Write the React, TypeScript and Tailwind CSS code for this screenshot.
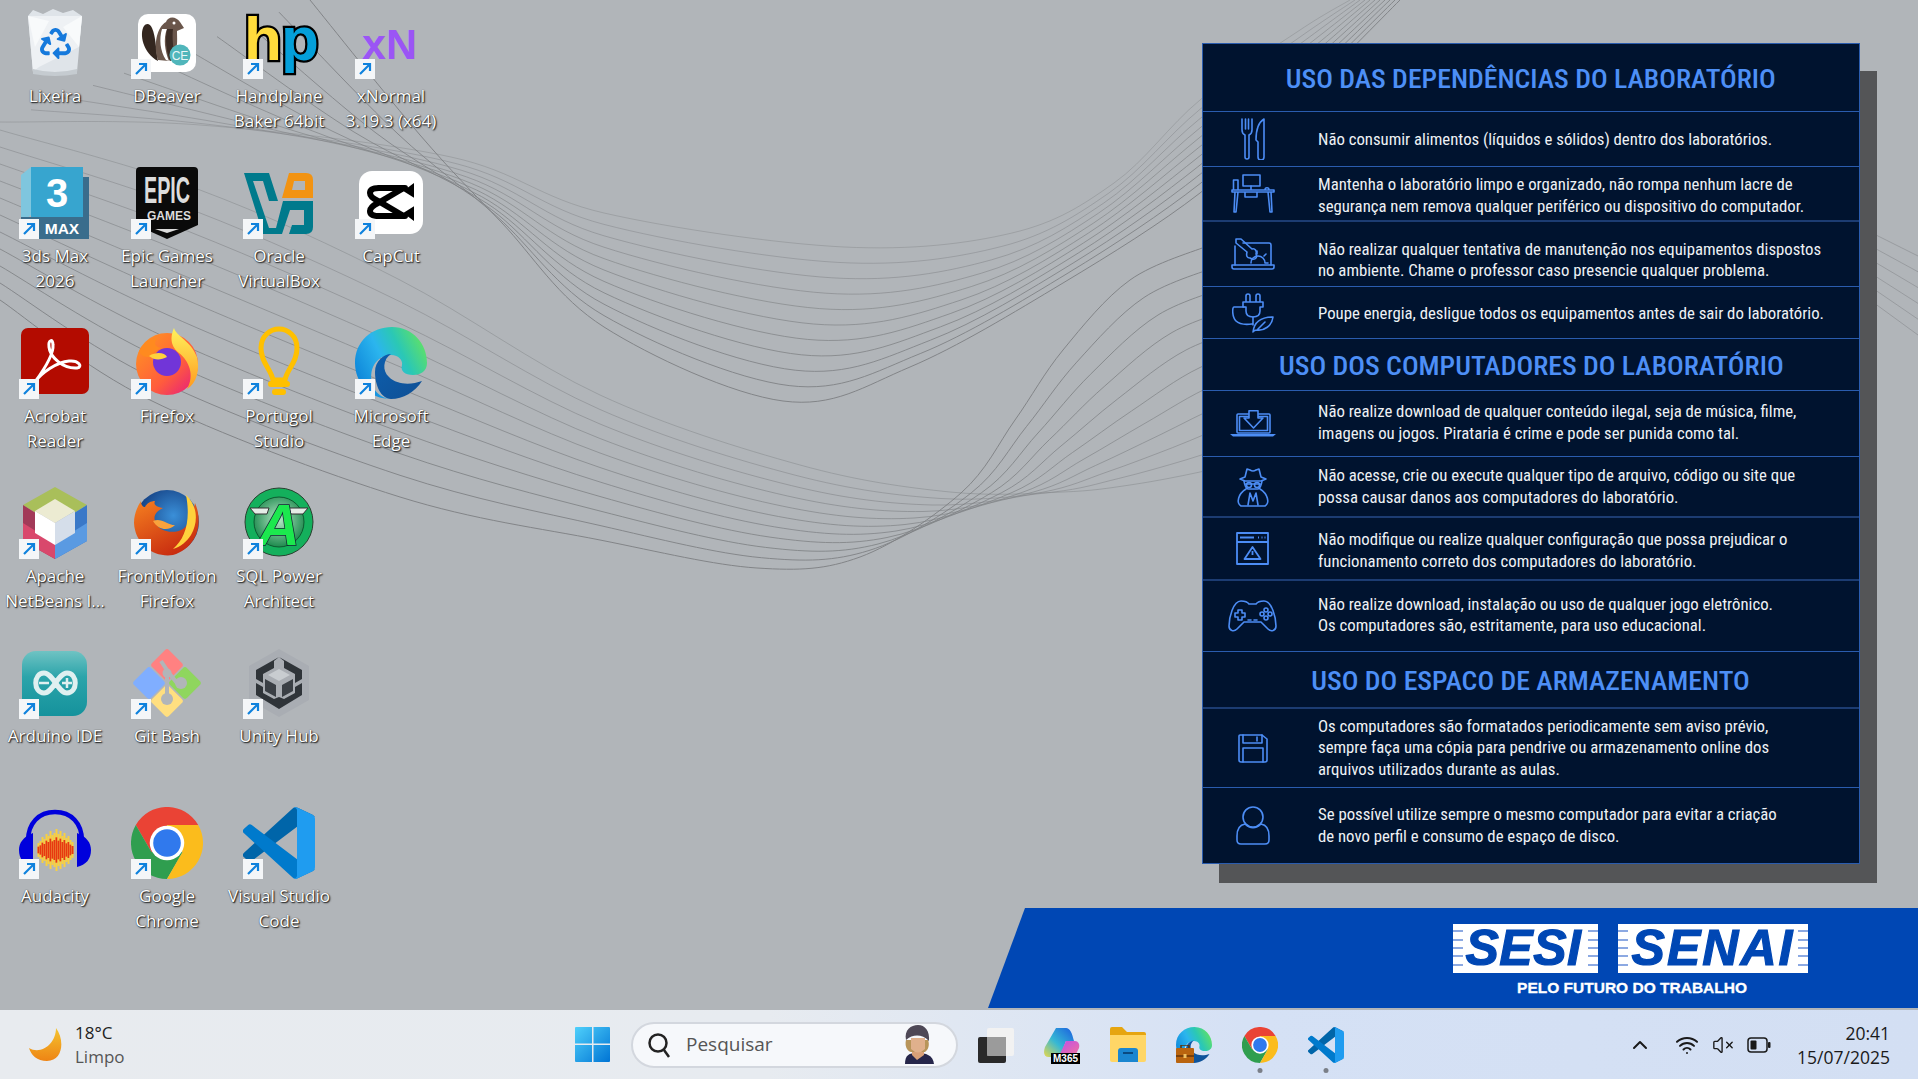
import { Fragment, type ReactNode } from "react";
import { ChevronUp, VolumeX, Wifi } from "lucide-react";
import { FaRecycle } from "react-icons/fa";

type Pt = [number, number];

// wallpaper: bundles of lines, each one a blend between two guide curves
const spline = (p: Pt[]) => {
  let d = `M${p[0][0]} ${p[0][1]}`;
  for (let i = 0; i < p.length - 1; i++) {
    const a = p[Math.max(i - 1, 0)];
    const b = p[i];
    const c = p[i + 1];
    const e = p[Math.min(i + 2, p.length - 1)];
    d += ` C${b[0] + (c[0] - a[0]) / 6} ${b[1] + (c[1] - a[1]) / 6} ${c[0] - (e[0] - b[0]) / 6} ${c[1] - (e[1] - b[1]) / 6} ${c[0]} ${c[1]}`;
  }
  return d;
};

const bundle = (from: Pt[], to: Pt[], n: number) =>
  Array.from({ length: n }, (_, i) => {
    const t = i / (n - 1);
    return spline(from.map((p, k) => [p[0] + (to[k][0] - p[0]) * t, p[1] + (to[k][1] - p[1]) * t] as Pt));
  });

const upperA: Pt[] = [[0, 122], [200, 125], [451, 157], [604, 213], [844, 247], [1012, 233], [1114, 183], [1200, 100], [1300, 30], [1350, 0]];
const upperB: Pt[] = [[310, 0], [420, 135], [502, 223], [604, 327], [783, 401], [910, 367], [1063, 283], [1200, 193], [1300, 100], [1400, 0]];
const lowerA: Pt[] = [[0, 130], [200, 190], [400, 280], [600, 395], [800, 465], [950, 492], [1063, 492], [1130, 485], [1200, 472], [1270, 455], [1340, 440]];
const lowerB: Pt[] = [[0, 300], [150, 400], [400, 497], [600, 540], [757, 568], [860, 557], [961, 493], [1015, 420], [1063, 350], [1130, 280], [1210, 245]];
const rightA: Pt[] = [[1870, 232], [1918, 256]];
const rightB: Pt[] = [[1870, 300], [1918, 335]];

const Wallpaper = () => (
  <svg className="absolute inset-0 h-full w-full" viewBox="0 0 1918 1010" fill="none">
    {bundle(upperA, upperB, 11).map((d, i) => (
      <path key={i} d={d} stroke="#7f8285" strokeWidth="1" opacity={0.4 + i * 0.055} />
    ))}
    {bundle(lowerA, lowerB, 11).map((d, i) => (
      <path key={i} d={d} stroke="#7f8285" strokeWidth="1" opacity={0.45 + i * 0.05} />
    ))}
    {bundle(rightA, rightB, 6).map((d, i) => (
      <path key={i} d={d} stroke="#7f8285" strokeWidth="1" opacity={0.5} />
    ))}
  </svg>
);

const Box = ({ children }: { children: ReactNode }) => (
  <svg viewBox="0 0 72 72" className="h-[72px] w-[72px] overflow-visible">
    {children}
  </svg>
);

const LOGO_FONT = "'Liberation Sans', sans-serif";

/* desktop icons */
const Bin = () => (
  <div className="relative h-[72px] w-[72px]">
    <svg viewBox="0 0 72 72" className="absolute inset-0">
      <path d="M9 9 L14 3 L24 7 L34 2 L44 6 L54 3 L63 9 L58 65 Q36 70 14 65Z" fill="#dfe4e9" />
      <path d="M9 9 L63 9 L60 40 L20 60 L14 65Z" fill="#eef1f4" />
      <path d="M9 9 L30 14 L16 40 Z M63 9 L44 20 L60 40Z" fill="#f8fafb" />
      <path d="M14 62 Q36 68 58 62 L58 67 Q36 71 14 67Z" fill="#c5cbd0" />
    </svg>
    <FaRecycle className="absolute left-[21px] top-[21px] h-[31px] w-[31px] text-[#1579dc]" />
  </div>
);

const DBeaver = () => (
  <Box>
    <rect x="7" y="7" width="58" height="58" rx="10" fill="#fff" />
    <path d="M13 19 C8 27 12 46 27 54 C25 44 25 30 21 21 C19 16 15 16 13 19Z" fill="#33261f" />
    <path d="M27 53 C22 38 26 20 35 15 C37 9 45 9 49 15 L53 21 L46 24 C46 32 47 38 44 45 L38 54Z" fill="#6a564b" />
    <path d="M31 22 C28 32 29 44 35 53 L38 54 C34 44 32 32 36 22Z" fill="#fff" />
    <path d="M36 22 C34 32 35 44 39 54 L44 52 C42 40 41 30 42 22Z" fill="#3b2c25" />
    <circle cx="43" cy="16" r="1.500" fill="#fff" />
    <circle cx="49" cy="48" r="10.500" fill="#50b6bb" />
    <text x="49" y="52.500" textAnchor="middle" fontSize="12" fill="#e9f7f7" fontFamily={LOGO_FONT}>CE</text>
  </Box>
);

const Handplane = () => (
  <Box>
    <text x="1" y="53" fontSize="62" fontWeight="700" stroke="#000" strokeWidth="4.500" paintOrder="stroke" fontFamily={LOGO_FONT} letterSpacing="-1">
      <tspan fill="#ffdc3c">h</tspan>
      <tspan fill="#049fd9">p</tspan>
    </text>
  </Box>
);

const XNormal = () => (
  <Box>
    <text x="7" y="52" fontSize="43" fontWeight="700" fill="#9b55f5" fontFamily={LOGO_FONT}>xN</text>
  </Box>
);

const Max = () => (
  <Box>
    <path d="M2 8 L12 0 V48 L2 56Z" fill="#7fc6de" />
    <path d="M64 10 H70 V72 H12 V50 H64Z" fill="#3a6d8c" />
    <rect x="12" y="0" width="52" height="50" fill="#37a5cf" />
    <rect x="2" y="50" width="68" height="22" fill="#3a6d8c" />
    <text x="38" y="40" textAnchor="middle" fontSize="40" fontWeight="700" fill="#fff" fontFamily={LOGO_FONT}>3</text>
    <text x="43" y="67" textAnchor="middle" fontSize="15.500" fontWeight="700" fill="#fff" fontFamily={LOGO_FONT}>MAX</text>
  </Box>
);

const Epic = () => (
  <Box>
    <path d="M9 0 H63 Q67 0 67 4 V58 L36 72 L5 58 V4 Q5 0 9 0Z" fill="#0a0a0a" />
    <text x="36" y="36" textAnchor="middle" fontSize="36" fontWeight="700" fill="#dcdcdc" fontFamily={LOGO_FONT} textLength="46" lengthAdjust="spacingAndGlyphs">EPIC</text>
    <text x="38" y="53" textAnchor="middle" fontSize="13" fontWeight="700" fill="#dcdcdc" fontFamily={LOGO_FONT} textLength="44" lengthAdjust="spacingAndGlyphs">GAMES</text>
    <path d="M24 62 H48 L36 66Z" fill="#dcdcdc" />
  </Box>
);

const VBox = () => (
  <Box>
    <path d="M1 6 H26 L35 34 H26 L20 14 H10 L26 61 L33 61 L40 34 H70 V60 Q70 67 63 67 H46 L49 58 H61 V43 H47 L39 67 H20Z" fill="#007a8c" />
    <path d="M46 6 H63 Q70 6 70 13 V31 H39Z M51 14 L49 23 H62 V14Z" fill="#f29312" fillRule="evenodd" />
  </Box>
);

const CapCut = () => (
  <Box>
    <rect x="4" y="4" width="64" height="63" rx="13" fill="#fff" />
    <path d="M23 21 H50 M23 49 H50 M24 21 Q15 21 15 26 Q15 30 23 34 L47 48 M24 49 Q15 49 15 44 Q15 40 23 36 L47 22" fill="none" stroke="#000" strokeWidth="6" strokeLinecap="round" />
    <path d="M58 18 V29 L50 24Z M58 52 V41 L50 46Z" fill="#000" stroke="#000" strokeWidth="2" />
  </Box>
);

const Acrobat = () => (
  <Box>
    <rect x="2" y="1" width="68" height="66" rx="7" fill="#b30b00" />
    <path d="M16 55 C24 44 35 28 34 18 C34 11 29 13 30 20 C31 30 44 42 58 41 C64 40 60 33 50 34 C38 35 22 46 16 55Z" fill="none" stroke="#fff" strokeWidth="3" />
  </Box>
);

const Firefox = () => (
  <Box>
    <defs>
      <linearGradient id="ff-a" x1="0" y1="0" x2="1" y2="1">
        <stop offset="0" stopColor="#ff9a1f" />
        <stop offset="0.6" stopColor="#ff5d3c" />
        <stop offset="1" stopColor="#e31587" />
      </linearGradient>
      <linearGradient id="ff-b" x1="0" y1="0" x2="0" y2="1">
        <stop offset="0" stopColor="#fff25c" />
        <stop offset="1" stopColor="#ff9a1f" />
      </linearGradient>
    </defs>
    <circle cx="36" cy="37" r="31" fill="url(#ff-a)" />
    <path d="M43 1 C45 9 60 14 66 30 C69 42 66 56 56 62 C64 48 58 34 48 26 C38 18 40 8 43 1Z" fill="url(#ff-b)" />
    <circle cx="36" cy="35" r="14" fill="#7135d8" />
    <path d="M8 24 C14 14 20 10 26 12 C22 16 24 20 30 21 C24 24 20 26 24 28 C18 32 10 30 8 24Z" fill="#ff8a1f" />
    <path d="M18 29 C26 24 34 26 36 30 C30 33 24 34 18 29Z" fill="#ffd23c" />
  </Box>
);

const Portugol = () => (
  <Box>
    <path d="M30 53 C28 42 18 36 18 21 C18 9 27 2 36 2 C45 2 54 9 54 21 C54 36 44 42 42 53Z" fill="none" stroke="#ffc000" strokeWidth="5" />
    <rect x="25" y="54" width="22" height="6" rx="3" fill="#ffc000" />
    <rect x="29" y="62" width="14" height="6" rx="3" fill="#ffc000" />
  </Box>
);

const EdgeArt = () => (
  <>
    <defs>
      <linearGradient id="edge-a" x1="0" y1="0.8" x2="1" y2="0.3">
        <stop offset="0" stopColor="#0a7fd6" />
        <stop offset="0.45" stopColor="#2bb5ee" />
        <stop offset="0.7" stopColor="#2bc8b4" />
        <stop offset="1" stopColor="#5fe068" />
      </linearGradient>
      <linearGradient id="edge-b" x1="0" y1="0" x2="1" y2="1">
        <stop offset="0" stopColor="#0d5fae" />
        <stop offset="1" stopColor="#0f4f94" />
      </linearGradient>
    </defs>
    <path d="M0 36 C0 14 17 0 37 0 C58 0 72 17 72 36 C72 44 66 48 58 48 C50 48 45 44 47 38 C48 34 44 28 36 28 C22 28 12 42 18 60 C22 68 30 72 36 72 C15 72 0 56 0 36Z" fill="url(#edge-a)" />
    <path d="M20 45 C20 34 29 27 36 27 C28 32 27 44 34 50 C42 58 56 58 67 54 C60 65 48 72 36 72 C26 72 20 58 20 45Z" fill="url(#edge-b)" />
  </>
);

const Edge = () => (
  <Box>
    <EdgeArt />
  </Box>
);

const NetBeans = () => (
  <Box>
    <path d="M36 0 L68 18 L52 28 L36 20 L20 28 L4 18Z" fill="#a9bf5a" />
    <path d="M4 18 L20 28 V42 L36 52 V72 L4 54Z" fill="#a23a58" />
    <path d="M4 36 L36 56 V72 L4 54Z" fill="#d9486c" />
    <path d="M68 18 L52 28 V42 L36 52 V72 L68 54Z" fill="#3a78c8" />
    <path d="M68 36 L36 56 V72 L68 54Z" fill="#5a9ae2" />
    <path d="M36 12 L56 24 L36 36 L16 24Z" fill="#ecebd2" />
    <path d="M16 24 L36 36 V58 L16 46Z" fill="#fff" />
    <path d="M56 24 L36 36 V58 L56 46Z" fill="#d5deea" />
  </Box>
);

const OldFirefox = () => (
  <Box>
    <defs>
      <radialGradient id="of-a" cx="0.6" cy="0.4" r="0.6">
        <stop offset="0" stopColor="#3a8fd8" />
        <stop offset="1" stopColor="#123a7c" />
      </radialGradient>
      <linearGradient id="of-b" x1="0" y1="0" x2="0.6" y2="1">
        <stop offset="0" stopColor="#f58020" />
        <stop offset="1" stopColor="#c82c10" />
      </linearGradient>
    </defs>
    <circle cx="36" cy="35" r="32" fill="url(#of-a)" />
    <path d="M64 16 C72 34 68 60 42 68 C24 71 4 58 3 36 C3 28 6 20 10 14 C10 18 12 20 14 20 C16 16 20 14 24 14 C22 18 26 20 32 21 C26 24 22 28 24 34 C26 44 42 48 52 42 C60 36 62 26 64 16Z" fill="url(#of-b)" />
    <path d="M55 8 C66 18 68 34 60 48 C56 54 50 60 42 62 C54 52 60 34 55 8Z" fill="#ffd23c" />
    <path d="M22 34 C30 30 36 38 44 38 C38 44 28 44 22 34Z" fill="#f9a23c" />
  </Box>
);

const SqlPower = () => (
  <Box>
    <defs>
      <radialGradient id="sp-a" cx="0.5" cy="0.45" r="0.55">
        <stop offset="0" stopColor="#b8e8c8" />
        <stop offset="1" stopColor="#1e8a4e" />
      </radialGradient>
    </defs>
    <circle cx="36" cy="35" r="34" fill="#14b05c" stroke="#2a4030" strokeWidth="1" />
    <circle cx="36" cy="35" r="25" fill="url(#sp-a)" stroke="#0d5a30" strokeWidth="1" />
    <path d="M7 21 H26 L24 27 H12Z M65 21 H46 L48 27 H60Z" fill="#e4ece6" stroke="#333" strokeWidth="1" />
    <text x="36" y="58" textAnchor="middle" fontSize="58" fontWeight="700" fontStyle="italic" fill="#1ce84e" stroke="#123" strokeWidth="1.500" paintOrder="stroke" fontFamily={LOGO_FONT}>A</text>
  </Box>
);

const Arduino = () => (
  <Box>
    <defs>
      <linearGradient id="ar-a" x1="0" y1="0" x2="0" y2="1">
        <stop offset="0" stopColor="#6fc3c3" />
        <stop offset="0.4" stopColor="#2ba4aa" />
        <stop offset="1" stopColor="#15929c" />
      </linearGradient>
    </defs>
    <rect x="3" y="4" width="65" height="65" rx="14" fill="url(#ar-a)" />
    <path d="M25 26 C14 26 14 46 25 46 C34 46 39 26 48 26 C59 26 59 46 48 46 C39 46 34 26 25 26Z" fill="none" stroke="#dff0f0" strokeWidth="5" />
    <path d="M20 36 H30 M43 36 H53 M48 31 V41" stroke="#dff0f0" strokeWidth="2.500" />
  </Box>
);

const GitBash = () => (
  <Box>
    <rect x="24" y="6" width="24" height="24" rx="3" transform="rotate(45 36 18)" fill="#ff8181" />
    <rect x="6" y="24" width="24" height="24" rx="3" transform="rotate(45 18 36)" fill="#80aeff" />
    <rect x="42" y="24" width="24" height="24" rx="3" transform="rotate(45 54 36)" fill="#8fd65e" />
    <rect x="24" y="42" width="24" height="24" rx="3" transform="rotate(45 36 54)" fill="#ffdf80" />
    <path d="M30 14 L38 26 L46 36 M36 26 V50" stroke="#b1b5b9" strokeWidth="4" fill="none" />
    <circle cx="36" cy="26" r="4.500" fill="#b1b5b9" />
    <circle cx="50" cy="36" r="6" fill="#b1b5b9" />
    <circle cx="36" cy="52" r="6" fill="#b1b5b9" />
  </Box>
);

const Unity = () => (
  <Box>
    <path d="M36 2 L66 19 V53 L36 70 L6 53 V19Z" fill="#a9adb3" />
    <path d="M36 10 L59 23 V32 L52 36 V27 L41 21 V14 Z M36 10 L13 23 V32 L20 36 V27 L31 21 V14Z" fill="#2f3439" />
    <path d="M36 22 L47 28 L36 34 L25 28Z" fill="#c8ccd0" />
    <path d="M13 36 L20 40 V46 L31 52 L36 50 L41 52 L52 46 V40 L59 36 V48 L36 62 L13 48Z" fill="#2f3439" />
    <path d="M22 32 L33 38 V50 L22 44Z M50 32 L39 38 V50 L50 44Z" fill="#3a3f45" />
  </Box>
);

const waveBars = [10, 14, 22, 18, 28, 24, 34, 26, 30, 38, 28, 34, 24, 30, 20, 24, 16, 12];
const Audacity = () => (
  <Box>
    <path d="M9 44 V34 C9 16 20 5 36 5 C52 5 63 16 63 34 V44" fill="none" stroke="#0000dc" strokeWidth="4.500" />
    <path d="M14 26 C4 30 0 36 0 43 C0 52 5 58 14 60Z M58 26 C68 30 72 36 72 43 C72 52 67 58 58 60Z" fill="#0000dc" />
    {waveBars.map((h, i) => (
      <Fragment key={i}>
        <rect x={18.500 + i * 2} y={43 - h / 2 - 2} width="2" height={h + 4} fill="#f8d040" />
        <rect x={18.500 + i * 2} y={43 - h / 3} width="2" height={(h * 2) / 3} fill="#e83810" />
      </Fragment>
    ))}
  </Box>
);

const ChromeArt = () => (
  <>
    <path d="M24 24 L13.600 30 L3.200 12 A24 24 0 0 1 44.800 12 H24Z" fill="#ea4335" />
    <path d="M24 24 L34.400 30 L24 48 A24 24 0 0 1 3.200 12 L13.600 30Z" fill="#2f9e4f" />
    <path d="M24 24 L24 12 H44.800 A24 24 0 0 1 24 48 L34.400 30Z" fill="#fbbc1c" />
    <circle cx="24" cy="24" r="11.500" fill="#fff" />
    <circle cx="24" cy="24" r="9.200" fill="#3079ed" />
  </>
);

const VsArt = () => (
  <>
    <path d="M96.500 10.800 L75.900 0.900 A6.200 6.200 0 0 0 68.900 2.100 L1.400 63.600 A4.200 4.200 0 0 0 1.400 69.800 L6.900 74.800 A4.200 4.200 0 0 0 12.200 75 L93.400 13.400 A4.100 4.100 0 0 1 100 16.700 V16.400 A6.200 6.200 0 0 0 96.500 10.800Z" fill="#0065a9" />
    <path d="M96.500 89.200 L75.900 99.100 A6.200 6.200 0 0 1 68.900 97.900 L1.400 36.400 A4.200 4.200 0 0 1 1.400 30.200 L6.900 25.200 A4.200 4.200 0 0 1 12.200 25 L93.400 86.600 A4.100 4.100 0 0 0 100 83.300 V83.600 A6.200 6.200 0 0 1 96.500 89.200Z" fill="#007acc" />
    <path d="M75.900 99.100 A6.200 6.200 0 0 1 68.900 97.900 C71.200 100.200 75 98.600 75 95.400 V4.600 C75 1.400 71.200 -0.200 68.900 2.100 A6.200 6.200 0 0 1 75.900 0.900 L96.500 10.800 A6.200 6.200 0 0 1 100 16.400 V83.600 A6.200 6.200 0 0 1 96.500 89.200Z" fill="#1f9cf0" />
  </>
);

const Chrome = () => (
  <svg viewBox="0 0 48 48" className="h-[72px] w-[72px]">
    <ChromeArt />
  </svg>
);

const VsCode = () => (
  <svg viewBox="0 0 100 100" className="h-[72px] w-[72px]">
    <VsArt />
  </svg>
);

type Shortcut = { name: ReactNode; icon: ReactNode; plain?: boolean };

const desktop: Shortcut[][] = [
  [
    { name: "Lixeira", icon: <Bin />, plain: true },
    { name: "DBeaver", icon: <DBeaver /> },
    { name: <>Handplane<br />Baker 64bit</>, icon: <Handplane /> },
    { name: <>xNormal<br />3.19.3 (x64)</>, icon: <XNormal /> },
  ],
  [
    { name: <>3ds Max<br />2026</>, icon: <Max /> },
    { name: <>Epic Games<br />Launcher</>, icon: <Epic /> },
    { name: <>Oracle<br />VirtualBox</>, icon: <VBox /> },
    { name: "CapCut", icon: <CapCut /> },
  ],
  [
    { name: <>Acrobat<br />Reader</>, icon: <Acrobat /> },
    { name: "Firefox", icon: <Firefox /> },
    { name: <>Portugol<br />Studio</>, icon: <Portugol /> },
    { name: <>Microsoft<br />Edge</>, icon: <Edge /> },
  ],
  [
    { name: <>Apache<br />NetBeans I...</>, icon: <NetBeans /> },
    { name: <>FrontMotion<br />Firefox</>, icon: <OldFirefox /> },
    { name: <>SQL Power<br />Architect</>, icon: <SqlPower /> },
  ],
  [
    { name: "Arduino IDE", icon: <Arduino /> },
    { name: "Git Bash", icon: <GitBash /> },
    { name: "Unity Hub", icon: <Unity /> },
  ],
  [
    { name: "Audacity", icon: <Audacity /> },
    { name: <>Google<br />Chrome</>, icon: <Chrome /> },
    { name: <>Visual Studio<br />Code</>, icon: <VsCode /> },
  ],
];

const ShortcutArrow = () => (
  <div className="absolute bottom-0 left-0 flex h-5 w-5 items-center justify-center bg-[#f4f6f8]">
    <svg viewBox="0 0 14 14" className="h-[14px] w-[14px]" fill="none" stroke="#0f82dd" strokeWidth="2.200">
      <path d="M2 12 L12 2 M5 2 H12 V9" />
    </svg>
  </div>
);

const DesktopIcon = ({ item }: { item: Shortcut }) => (
  <div className="flex h-40 w-28 flex-col items-center pr-[2px] pt-[7px]">
    <div className="relative">
      {item.icon}
      {!item.plain && <ShortcutArrow />}
    </div>
    <div className="mt-1 whitespace-nowrap text-center text-[17px] leading-[25px] text-white [text-shadow:1px_1px_1.500px_rgba(0,0,0,0.95),0_0_1px_rgba(0,0,0,0.7)]">
      {item.name}
    </div>
  </div>
);

/* poster icons */
const line = { fill: "none", stroke: "#4c8df5", strokeWidth: 1.600, strokeLinejoin: "round", strokeLinecap: "round" } as const;

const CutleryIcon = () => (
  <svg width="24" height="42" viewBox="0 0 24 42" {...line}>
    <path d="M1 1 V12 C1 15 3 16.500 4 17 V39 A2 2 0 0 0 8 39 V17 C9 16.500 11 15 11 12 V1 M4.500 1 V11 M7.500 1 V11" />
    <path d="M23 1 C18 4 15 11 15 22 L17 24 V39 A3 3 0 0 0 23 39Z" />
  </svg>
);
const DeskIcon = () => (
  <svg width="44" height="40" viewBox="0 0 44 40" {...line}>
    <rect x="12" y="1" width="17" height="11" />
    <path d="M20 12 V16 M16 16 H25 M1 16 H43 V18 H1Z M4 18 L3 38 H5 L7 18 M37 18 L39 38 H41 L40 18 M14 18 V23 H26 V18 M2.500 16 V6 H7 V16 M34 16 C34 13 38 13 38 16" />
  </svg>
);
const RepairIcon = () => (
  <svg width="44" height="33" viewBox="0 0 44 33" {...line}>
    <path d="M12 5 H38 Q40 5 40 7 V27 M4 27 V8" />
    <path d="M1 27 H43 V29 Q43 31 41 31 H3 Q1 31 1 29Z" />
    <path d="M5 1 L10 1 L21 11 C24 10 26 13 25 16 C27 20 23 23 19 20 C16 20 15 18 16 14 L5 5Z" />
    <path d="M20 25 A7 7 0 0 1 34 25 M26 16 V13 M33 18 L35 16 M37 25 H34" />
  </svg>
);
const PlugIcon = () => (
  <svg width="42" height="40" viewBox="0 0 42 40" {...line}>
    <path d="M14 9 V3 A2 2 0 0 1 18 3 V9 M24 9 V3 A2 2 0 0 1 28 3 V9 M11 9 H31 V14 H28 V18 C28 22 25 24 21 24 C17 24 14 22 14 18 V14 H11Z" />
    <path d="M21 24 V32 M12 14 H2 C0 14 0 24 4 28 C7 31 12 32 20 31" />
    <path d="M21 39 C22 30 28 24 41 24 C40 33 32 38 25 37 Q22 37 21 39Z M25 37 L33 29" />
  </svg>
);
const DownloadIcon = () => (
  <svg width="48" height="27" viewBox="0 0 48 27" {...line}>
    <rect x="8" y="4" width="33" height="19" rx="1" />
    <rect x="10.500" y="6.500" width="28" height="14" />
    <path d="M20 0.800 H29 V8 H34 L24.500 18 L15 8 H20Z" fill="#00132f" />
    <path d="M1 24 H47 L44 26.500 H4Z" fill="#4c8df5" stroke="none" />
  </svg>
);
const SpyIcon = () => (
  <svg width="34" height="40" viewBox="0 0 34 40" {...line}>
    <path d="M4 12 L9 10 L11 2 L14 3 Q17 5 20 3 L23 2 L25 10 L30 12 L25 14 H9Z" />
    <path d="M8 14 Q9 21 12 22 H22 Q25 21 26 14 M10 17 H24 M10 22 C2 27 0 36 5 39 H29 C34 36 32 27 24 22" />
    <circle cx="13" cy="18" r="2.500" />
    <circle cx="21" cy="18" r="2.500" />
    <path d="M12 38 L14 26 L17 34 L20 26 L22 38" />
  </svg>
);
const WarningWindowIcon = () => (
  <svg width="33" height="33" viewBox="0 0 33 33" {...line} strokeWidth="1.800" strokeLinecap="butt">
    <rect x="1" y="1" width="31" height="31" />
    <path d="M1 10 H32 M4 5.500 H18 M22 5.500 H23 M25.500 5.500 H26.500 M28.500 5.500 H29.500" />
    <path d="M16.500 15 L24.500 27 H8.500Z M16.500 19 V23" />
  </svg>
);
const PadIcon = () => (
  <svg width="49" height="32" viewBox="0 0 49 32" {...line}>
    <path d="M13 1 Q19 1 21 4 H28 Q30 1 36 1 C44 1 48 18 48 26 C48 31 43 32 40 29 L33 22 H16 L9 29 C6 32 1 31 1 26 C1 18 5 1 13 1Z" />
    <path d="M10 10 V13 H7 V17 H10 V20 H14 V17 H17 V13 H14 V10Z M20 20 H23 M26 20 H29" />
    <circle cx="38" cy="10" r="2" />
    <circle cx="38" cy="18" r="2" />
    <circle cx="34" cy="14" r="2" />
    <circle cx="42" cy="14" r="2" />
  </svg>
);
const FloppyIcon = () => (
  <svg width="30" height="29" viewBox="0 0 30 29" {...line}>
    <path d="M2 1 H24 L29 5 V26 Q29 28 27 28 H3 Q1 28 1 26 V2 Q1 1 2 1Z" />
    <path d="M5 1 V9 H24 V1 M19 3 V7 M5 28 V14 H25 V28" />
  </svg>
);
const UserIcon = () => (
  <svg width="34" height="39" viewBox="0 0 34 39" {...line}>
    <circle cx="17" cy="11" r="10" />
    <path d="M9 18 C3 19 1 24 1 30 V34 Q1 38 5 38 H29 Q33 38 33 34 V30 C33 24 31 19 25 18 C20 23 14 23 9 18Z" />
  </svg>
);

type Rule = { height: string; nudge: string; icon: ReactNode; text: ReactNode };
type Section = { title: string; height: string; rules: Rule[] };

const THIN = "border-b border-[#2a5cae]";
const THICK = "border-b-2 border-[#1c3c72]";

const sections: Section[] = [
  {
    title: "USO DAS DEPENDÊNCIAS DO LABORATÓRIO",
    height: `h-[68px] ${THIN}`,
    rules: [
      { height: `h-[55px] ${THIN}`, nudge: "mt-[2px]", icon: <CutleryIcon />, text: "Não consumir alimentos (líquidos e sólidos) dentro dos laboratórios." },
      { height: `h-[55px] ${THICK}`, nudge: "mt-[4px]", icon: <DeskIcon />, text: <>Mantenha o laboratório limpo e organizado, não rompa nenhum lacre de<br />segurança nem remova qualquer periférico ou dispositivo do computador.</> },
      { height: `h-[65px] ${THIN}`, nudge: "mt-[12px]", icon: <RepairIcon />, text: <>Não realizar qualquer tentativa de manutenção nos equipamentos dispostos<br />no ambiente. Chame o professor caso presencie qualquer problema.</> },
      { height: `h-[52px] ${THIN}`, nudge: "mt-[2px]", icon: <PlugIcon />, text: "Poupe energia, desligue todos os equipamentos antes de sair do laboratório." },
    ],
  },
  {
    title: "USO DOS COMPUTADORES DO LABORATÓRIO",
    height: `h-[52px] ${THIN}`,
    rules: [
      { height: `h-[66px] ${THIN}`, nudge: "mb-[2px]", icon: <DownloadIcon />, text: <>Não realize download de qualquer conteúdo ilegal, seja de música, filme,<br />imagens ou jogos. Pirataria é crime e pode ser punida como tal.</> },
      { height: `h-[61px] ${THICK}`, nudge: "mt-0", icon: <SpyIcon />, text: <>Não acesse, crie ou execute qualquer tipo de arquivo, código ou site que<br />possa causar danos aos computadores do laboratório.</> },
      { height: `h-[63px] ${THICK}`, nudge: "mt-[4px]", icon: <WarningWindowIcon />, text: <>Não modifique ou realize qualquer configuração que possa prejudicar o<br />funcionamento correto dos computadores do laboratório.</> },
      { height: `h-[71px] ${THIN}`, nudge: "mb-[2px]", icon: <PadIcon />, text: <>Não realize download, instalação ou uso de qualquer jogo eletrônico.<br />Os computadores são, estritamente, para uso educacional.</> },
    ],
  },
  {
    title: "USO DO ESPACO DE ARMAZENAMENTO",
    height: `h-[57px] ${THICK}`,
    rules: [
      { height: `h-[79px] ${THIN}`, nudge: "mt-0", icon: <FloppyIcon />, text: <>Os computadores são formatados periodicamente sem aviso prévio,<br />sempre faça uma cópia para pendrive ou armazenamento online dos<br />arquivos utilizados durante as aulas.</> },
      { height: "h-[75px]", nudge: "mt-0", icon: <UserIcon />, text: <>Se possível utilize sempre o mesmo computador para evitar a criação<br />de novo perfil e consumo de espaço de disco.</> },
    ],
  },
];

const Poster = () => (
  <div className="relative mr-[58px] mt-[43px] w-[658px]">
    <div className="absolute -bottom-[19px] -right-[17px] left-[17px] top-[28px] bg-[#545557]" />
    <div className="relative border border-[#2a5cae] bg-[#00132f] font-['Roboto',sans-serif]">
      {sections.map((s) => (
        <Fragment key={s.title}>
          <div className={`flex items-center justify-center ${s.height}`}>
            <h2 className="mt-1 scale-x-[1.11] whitespace-nowrap text-[25px] font-medium leading-none text-[#4d8ff6] [font-stretch:75%]">{s.title}</h2>
          </div>
          {s.rules.map((r, i) => (
            <div key={i} className={`flex items-center ${r.height}`}>
              <div className="flex w-[99px] shrink-0 justify-center">{r.icon}</div>
              <p className={`ml-4 whitespace-nowrap text-[16.750px] leading-[21.400px] text-[#eef1f5] [font-stretch:75%] ${r.nudge}`}>{r.text}</p>
            </div>
          ))}
        </Fragment>
      ))}
    </div>
  </div>
);

const Stripes = () => (
  <div className="h-[43px] w-[10px] shrink-0 bg-[repeating-linear-gradient(to_bottom,transparent_0,transparent_6.300px,#8ca9e2_6.300px,#8ca9e2_8.300px)]" />
);

const Banner = () => (
  <div className="mb-[2px] mt-auto flex h-[100px] w-[930px] flex-col items-end bg-[#0047b4] pr-[110px] pt-4 [clip-path:polygon(37px_0,100%_0,100%_100%,0_100%)]">
    <div className="flex gap-5 font-['Liberation_Sans',sans-serif] text-[50px] font-bold italic leading-[49px] text-[#0047b4] [-webkit-text-stroke:1.200px_#0047b4]">
      <div className="flex h-[49px] w-[145px] justify-between bg-white">
        <Stripes />
        <span className="-ml-1 tracking-[0.5px]">SESI</span>
        <Stripes />
      </div>
      <div className="flex h-[49px] w-[190px] justify-between bg-white">
        <Stripes />
        <span className="tracking-[2px]">SENAI</span>
        <Stripes />
      </div>
    </div>
    <div className="mr-[61px] mt-2 whitespace-nowrap font-['Liberation_Sans',sans-serif] text-[15.500px] font-bold leading-[14px] text-white [-webkit-text-stroke:0.300px_#fff]">
      PELO FUTURO DO TRABALHO
    </div>
  </div>
);

/* taskbar */
const StartLogo = () => (
  <svg width="35" height="35" viewBox="0 0 35 35">
    <defs>
      <linearGradient id="win" x1="0" y1="0" x2="1" y2="1">
        <stop offset="0" stopColor="#4fd0fb" />
        <stop offset="1" stopColor="#0074d4" />
      </linearGradient>
    </defs>
    <path d="M1 0 H17 V16.500 H0 V1 Q0 0 1 0Z M18.500 0 H34 Q35 0 35 1 V16.500 H18.500Z M0 18 H17 V35 H1 Q0 35 0 34Z M18.500 18 H35 V34 Q35 35 34 35 H18.500Z" fill="url(#win)" />
  </svg>
);

const Avatar = () => (
  <svg width="39" height="39" viewBox="0 0 39 39">
    <path d="M8 39 C8 30 12 28 20 28 C29 28 36 30 37 39Z" fill="#26264a" />
    <path d="M15 22 H27 V30 L20 35 L15 30Z" fill="#d8a078" />
    <path d="M9 15 C7 23 12 27 14 27 H28 C31 25 33 20 31 15Z" fill="#b8955a" />
    <path d="M14 13 H28 V24 Q21 31 14 24Z" fill="#e0b08c" />
    <path d="M9 15 C7 5 14 0 21 0 C28 0 33 6 32 16 C25 9 16 9 9 15Z" fill="#4e4856" />
  </svg>
);

const TaskView = () => (
  <svg width="36" height="36" viewBox="0 0 36 36">
    <rect x="0" y="10" width="28" height="26" rx="2" fill="#2a2a2a" />
    <rect x="9" y="1" width="27" height="28" rx="2" fill="#f2f2f2" />
    <rect x="9" y="10" width="19" height="19" fill="#8c8c8c" opacity="0.850" />
  </svg>
);

const M365 = () => (
  <div className="relative h-9 w-9">
    <svg viewBox="0 0 36 36" className="absolute inset-0">
      <defs>
        <linearGradient id="m-a" x1="0" y1="1" x2="1" y2="0">
          <stop offset="0" stopColor="#e8d84a" />
          <stop offset="0.45" stopColor="#36b8d4" />
          <stop offset="1" stopColor="#1a5ee0" />
        </linearGradient>
        <linearGradient id="m-b" x1="0" y1="0" x2="1" y2="1">
          <stop offset="0" stopColor="#c050e8" />
          <stop offset="1" stopColor="#f070a0" />
        </linearGradient>
      </defs>
      <path d="M12 1 H22 C26 1 28 6 30 14 H22 L16 30 H5 C0 30 -1 26 1 20 Z" fill="url(#m-a)" />
      <path d="M22 14 H31 C34 14 36 17 35 21 L32 27 H16Z" fill="url(#m-b)" />
    </svg>
    <span className="absolute -bottom-[1px] right-0 bg-black px-[2px] font-['Liberation_Sans',sans-serif] text-[10px] font-bold leading-[11px] text-white">M365</span>
  </div>
);

const Folder = () => (
  <svg width="36" height="36" viewBox="0 0 36 36">
    <path d="M0 2 Q0 0 2 0 H12 L17 5 H34 Q36 5 36 7 V12 H0Z" fill="#e6a510" />
    <path d="M0 8 H36 V33 Q36 35 34 35 H2 Q0 35 0 33Z" fill="#ffd666" />
    <path d="M8 24 Q8 21 11 21 H25 Q28 21 28 24 V35 H8Z" fill="#1a86d0" />
    <rect x="13" y="25" width="10" height="2" fill="#0a4a80" />
  </svg>
);

const WorkEdge = () => (
  <div className="relative h-9 w-9">
    <svg viewBox="0 0 72 72" className="h-9 w-9">
      <EdgeArt />
    </svg>
    <svg viewBox="0 0 18 18" className="absolute bottom-0 left-0 h-[18px] w-[18px]">
      <rect x="5" y="0" width="8" height="5" fill="none" stroke="#5c3408" strokeWidth="1.500" />
      <rect x="0" y="3" width="18" height="15" rx="1" fill="#b9640f" />
      <rect x="0" y="10" width="18" height="2" fill="#7a400a" />
      <rect x="7.500" y="9" width="3" height="4" fill="#f0c060" />
    </svg>
  </div>
);

const RunDot = () => (
  <span className="absolute -bottom-[10px] left-1/2 h-[5px] w-[5px] -translate-x-1/2 rounded-full bg-[#7a7f88]" />
);

const Battery = () => (
  <svg width="24" height="16" viewBox="0 0 24 16" fill="none">
    <rect x="1" y="1" width="19" height="14" rx="3" stroke="#1a1a1a" strokeWidth="1.500" />
    <rect x="3.500" y="3.500" width="6" height="9" rx="1" fill="#1a1a1a" />
    <rect x="21" y="5" width="2.500" height="6" rx="1" fill="#1a1a1a" />
  </svg>
);

const Taskbar = () => (
  <div className="flex h-[69px] items-center bg-[linear-gradient(90deg,#e8ebef_0%,#e7ebf0_40%,#d5e1f5_65%,#d3dff3_100%)] font-['Open_Sans',sans-serif]">
    <div className="flex w-[575px] shrink-0 items-center pl-[29px]">
      <svg width="34" height="33" viewBox="0 0 34 33">
        <defs>
          <linearGradient id="moon" x1="0.5" y1="0" x2="0.5" y2="1">
            <stop offset="0" stopColor="#f4c430" />
            <stop offset="1" stopColor="#ee8414" />
          </linearGradient>
        </defs>
        <path d="M27 0 C36 12 34 33 18 33 C8 33 2 27 0 20 C12 27 27 16 27 0Z" fill="url(#moon)" />
      </svg>
      <div className="ml-3 text-[17px] leading-6">
        <div className="text-[#222]">18°C</div>
        <div className="text-[#555]">Limpo</div>
      </div>
    </div>
    <StartLogo />
    <div className="ml-[21px] flex h-[46px] w-[327px] items-center rounded-full border-2 border-[#d3d7de] bg-[#f6f8fb] pl-[14px] pr-[20px]">
      <svg width="24" height="26" viewBox="0 0 24 26" fill="none" stroke="#222" strokeWidth="2.500">
        <circle cx="11" cy="11" r="8.500" />
        <path d="M17 18 L22 25" />
      </svg>
      <span className="ml-[15px] text-[19px] text-[#555]">Pesquisar</span>
      <div className="ml-auto">
        <Avatar />
      </div>
    </div>
    <div className="ml-5 flex items-center gap-[30px]">
      <TaskView />
      <M365 />
      <Folder />
      <WorkEdge />
      <div className="relative h-9 w-9">
        <svg viewBox="0 0 48 48" className="h-9 w-9">
          <ChromeArt />
        </svg>
        <RunDot />
      </div>
      <div className="relative h-9 w-9">
        <svg viewBox="0 0 100 100" className="h-9 w-9">
          <VsArt />
        </svg>
        <RunDot />
      </div>
    </div>
    <div className="ml-auto flex items-center pr-[28px] text-[#1a1a1a]">
      <ChevronUp size={24} strokeWidth={2} className="mr-[23px]" />
      <Wifi size={24} strokeWidth={2} />
      <VolumeX size={22} strokeWidth={1.500} className="ml-[13px]" />
      <div className="ml-[13px]">
        <Battery />
      </div>
      <div className="ml-[26px] text-right text-[17.500px] leading-6">
        <div>20:41</div>
        <div>15/07/2025</div>
      </div>
    </div>
  </div>
);

export default function App() {
  return (
    <div className="flex h-screen w-screen flex-col overflow-hidden bg-[#b1b5b9] font-['Open_Sans',sans-serif]">
      <div className="relative flex h-[1010px] justify-between">
        <Wallpaper />
        <div className="relative flex flex-col">
          {desktop.map((row, i) => (
            <div key={i} className="flex">
              {row.map((item, k) => (
                <DesktopIcon key={k} item={item} />
              ))}
            </div>
          ))}
        </div>
        <div className="relative flex flex-col items-end">
          <Poster />
          <Banner />
        </div>
      </div>
      <Taskbar />
    </div>
  );
}
